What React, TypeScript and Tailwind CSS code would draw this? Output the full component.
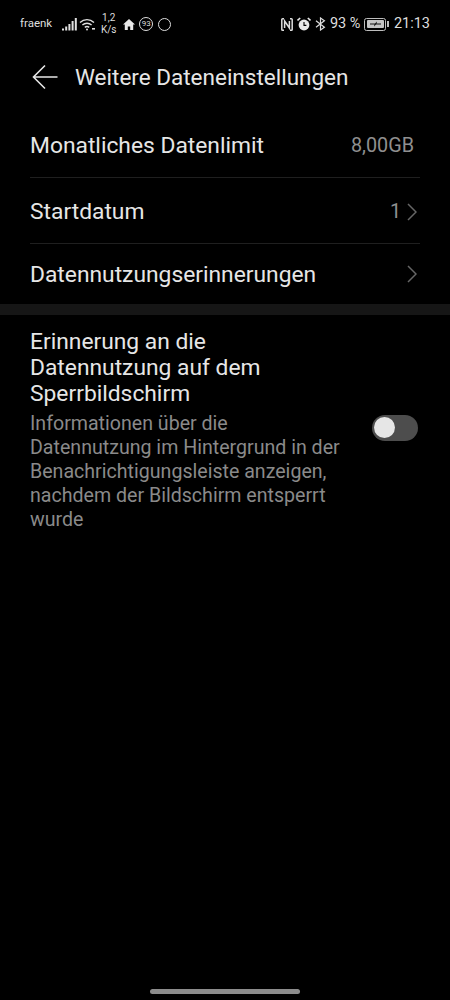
import React from 'react';

const font = { fontFamily: 'Roboto, "Noto Sans", sans-serif' };

const Chevron = () => (
    <svg width="10" height="18" viewBox="0 0 10 18" fill="none" stroke="#666" strokeWidth="1.5" className="ml-[6px]">
        <path d="M1 1l8 8-8 8" />
    </svg>
);

const StatusBar = () => (
    <div className="flex items-center h-[48px] pl-[20px] pr-[20px] text-[#dedede]">
        <span className="text-[11.5px] leading-none">fraenk</span>
        <svg width="15" height="13" viewBox="0 0 15 13" fill="#e0e0e0" className="ml-[10px]">
            <rect x="0" y="10.5" width="2" height="2" />
            <rect x="3.2" y="8.5" width="2" height="4" />
            <rect x="6.4" y="6" width="2" height="6.5" />
            <rect x="9.6" y="3" width="2" height="9.5" />
            <rect x="12.8" y="0" width="2" height="12.5" />
        </svg>
        <svg width="17" height="13" viewBox="0 0 17 13" fill="none" stroke="#e0e0e0" strokeWidth="1.4" className="ml-[2px]">
            <path d="M1 4.5C5 .6 11 .6 15 4.5" />
            <path d="M3.4 7C6 4.6 10 4.6 12.6 7" />
            <path d="M5.8 9.4C7 8.4 9 8.4 10.2 9.4" />
            <circle cx="8" cy="11.6" r="1" fill="#e0e0e0" stroke="none" />
            <rect x="13" y="10" width="3" height="1.6" fill="#e0e0e0" stroke="none" />
        </svg>
        <div className="flex flex-col items-center ml-[5px] text-[10px] leading-[12px] w-[15px]">
            <span>1,2</span>
            <span>K/s</span>
        </div>
        <svg width="12" height="11" viewBox="0 0 12 11" fill="#e8e8e8" className="ml-[7px]">
            <path d="M6 0L0 5.4h1.8V11h3V7.4h2.4V11h3V5.4H12z" />
        </svg>
        <div className="flex items-center justify-center ml-[4px] w-[14px] h-[14px] rounded-full border border-[#dedede] text-[8px] leading-none">93</div>
        <div className="ml-[5px] w-[13px] h-[13px] rounded-full border border-[#dedede]" />
        <div className="ml-auto flex items-center">
            <svg width="12" height="13" viewBox="0 0 12 13" fill="none" stroke="#dedede" strokeWidth="1.5">
                <path d="M3 .8H1.6a.8.8 0 0 0-.8.8v9.8a.8.8 0 0 0 .8.8H3M9 .8h1.4a.8.8 0 0 1 .8.8v9.8a.8.8 0 0 1-.8.8H9" />
                <path d="M3.6 10V3l4.8 7V3" />
            </svg>
            <svg width="14" height="14" viewBox="0 0 14 14" className="ml-[4px]">
                <path d="M0.5 3.5L3.2 1M13.5 3.5L10.8 1" stroke="#e8e8e8" strokeWidth="1.6" fill="none" />
                <circle cx="7" cy="8" r="5.4" fill="#e8e8e8" />
                <path d="M7 5v3.4h2.4" stroke="#000" strokeWidth="1.1" fill="none" />
            </svg>
            <svg width="11" height="14" viewBox="0 0 11 14" fill="none" stroke="#dedede" strokeWidth="1.2" className="ml-[4px]">
                <path d="M1 3.8l8.4 6.4L5.5 13V1l3.9 2.8L1 10.2" />
            </svg>
            <span className="ml-[4px] text-[14.5px] leading-none">93 %</span>
            <div className="flex items-center ml-[4px]">
                <div className="flex items-center justify-center w-[22px] h-[13px] rounded-[2.5px] border border-[#bdbdbd] p-[1.5px]">
                    <div className="flex items-center justify-center w-full h-full rounded-[1px] bg-[#c4c4c4]">
                        <svg width="13" height="6" viewBox="0 0 13 6" fill="#111">
                            <path d="M1 2.4h5L8 .4 7.6 2.4H12v1.2H7L5 5.6l.4-2H1z" />
                        </svg>
                    </div>
                </div>
                <div className="ml-[1px] w-[1.5px] h-[6px] bg-[#bdbdbd]" />
            </div>
            <span className="ml-[5px] text-[14.5px] leading-none">21:13</span>
        </div>
    </div>
);

export default function App() {
    return (
        <div style={font} className="relative w-[450px] h-[1000px] bg-black overflow-hidden">
            <StatusBar />
            <div className="flex items-center h-[58px] pl-[32px]">
                <svg width="26" height="26" viewBox="0 0 26 26" fill="none" stroke="#e6e6e6" strokeWidth="1.6">
                    <path d="M25.5 13H1.5M13 1.5L1.5 13 13 24.5" />
                </svg>
                <span className="ml-[17px] text-[22.5px] leading-none text-[#e6e6e6]">Weitere Dateneinstellungen</span>
            </div>
            <div className="px-[30px] mt-[6px]">
                <div className="flex items-center h-[66px] pt-[3px] border-b border-[#1f1f1f]">
                    <span className="text-[22.8px] text-[#e6e6e6]">Monatliches Datenlimit</span>
                    <span className="ml-auto mr-[6px] text-[19.8px] text-[#8f8f8f]">8,00GB</span>
                </div>
                <div className="flex items-center h-[66px] pt-[3px] border-b border-[#1f1f1f]">
                    <span className="text-[22.8px] text-[#e6e6e6]">Startdatum</span>
                    <span className="ml-auto text-[19.8px] text-[#8f8f8f]">1</span>
                    <div className="mr-[3px] flex"><Chevron /></div>
                </div>
                <div className="flex items-center h-[60px] pt-[3px]">
                    <span className="text-[22.8px] text-[#e6e6e6]">Datennutzungserinnerungen</span>
                    <div className="ml-auto mr-[3px] mb-[3px] flex"><Chevron /></div>
                </div>
            </div>
            <div className="h-[11px] bg-[#161616]" />
            <div className="flex items-center pl-[30px] pr-[32px] pt-[14px]">
                <div className="w-[318px]">
                    <div className="text-[22.8px] leading-[26px] text-[#e6e6e6]">Erinnerung an die Datennutzung auf dem Sperrbildschirm</div>
                    <div className="mt-[5px] text-[19.6px] leading-[24px] text-[#8a8a8a]">Informationen über die<br />Datennutzung im Hintergrund in der Benachrichtigungsleiste anzeigen, nachdem der Bildschirm entsperrt wurde</div>
                </div>
                <div className="ml-auto mb-[6px] flex items-center w-[46px] h-[26px] rounded-full bg-[#4d4d4d] pl-[2px]">
                    <div className="w-[21px] h-[21px] rounded-full bg-[#e6e6e6]" />
                </div>
            </div>
            <div className="absolute bottom-[6px] left-[150px] w-[150px] h-[5px] rounded-full bg-[#8c8c8c]" />
        </div>
    );
}
